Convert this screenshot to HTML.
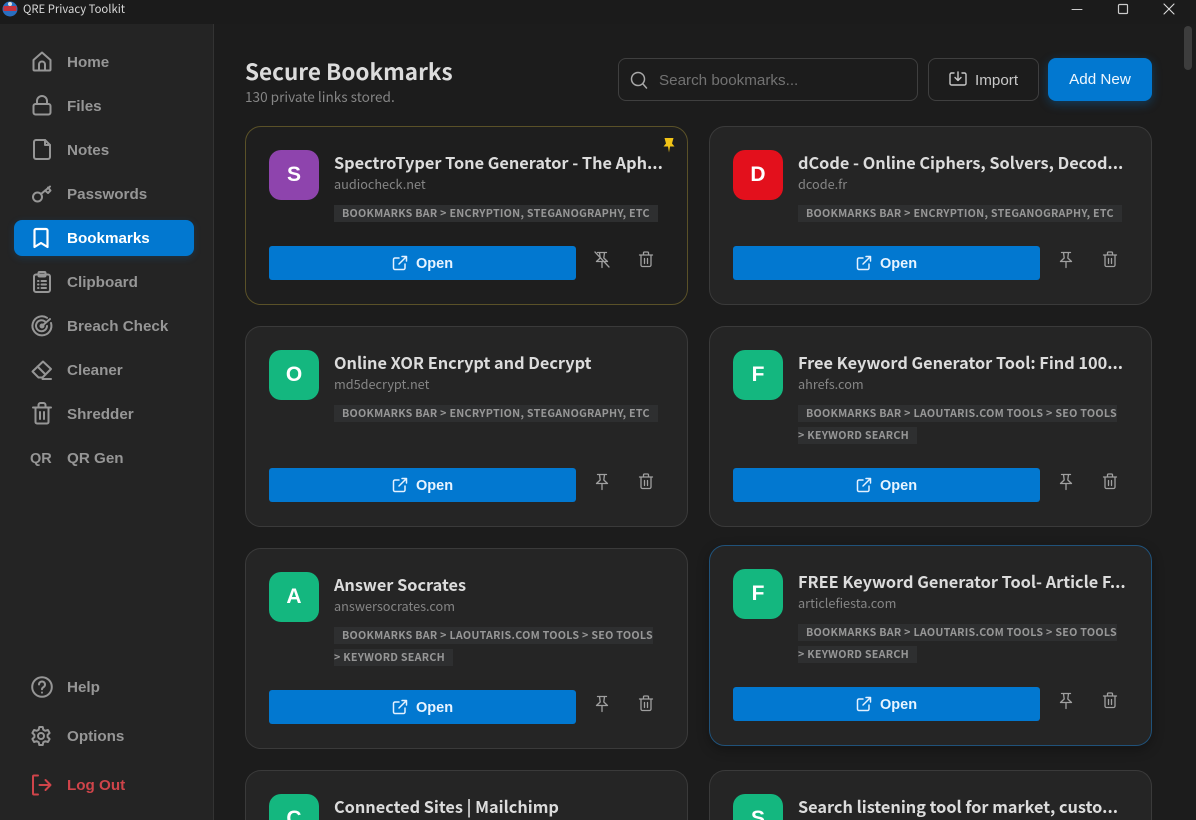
<!DOCTYPE html>
<html lang="en"><head><meta charset="utf-8"><title>QRE Privacy Toolkit</title>
<style>
*{box-sizing:border-box}
html,body{margin:0;padding:0;width:1196px;height:820px;overflow:hidden;background:#1c1c1c;font-family:"Liberation Sans",sans-serif}
#w{position:relative;width:1196px;height:820px;overflow:hidden;background:#1c1c1c}
.a{position:absolute}
.nav{position:absolute;left:67px;font:bold 15.2px/20px "Liberation Sans",sans-serif;color:#969696;white-space:nowrap;margin-top:1px}
svg{position:absolute;fill:none;stroke-linecap:round;stroke-linejoin:round}
.ni{stroke:#969696;stroke-width:2}
.card{position:absolute;width:443px;background:#252525;border:1px solid #3a3a3a;border-radius:16px;overflow:hidden}
.ic{position:absolute;left:23px;top:23px;width:50px;height:50px;border-radius:12px;color:#fff;font:bold 21px/50px "Liberation Sans",sans-serif;text-align:center;overflow:hidden}
.t{position:absolute;left:88px;top:23px;font:bold 16.3px/24px "Noto Sans CJK JP",sans-serif;color:#dcdcdc;white-space:nowrap}
.d{position:absolute;left:88px;top:47px;font:12.7px/20px "Noto Sans CJK JP",sans-serif;color:#858585;white-space:nowrap}
.g{position:absolute;left:88px;top:76px;width:340px;font:bold 10.7px/22px "Noto Sans CJK JP",sans-serif;color:#979797;letter-spacing:.27px;white-space:nowrap}
.g span{background:#2e2f30;padding:1px 8px}
.b{position:absolute;left:23px;width:307px;height:34px;background:#0278d0;border-radius:3px;color:#e8f4ff;font:bold 14.5px/36px "Liberation Sans",sans-serif;padding-left:147px}
</style></head><body><div id="w">

<div class="a" style="left:0;top:0;width:1196px;height:24px;background:#1b1b1b"></div>
<svg style="left:2px;top:1px" width="16" height="16" viewBox="0 0 16 16"><circle cx="8" cy="8" r="7.5" fill="#2a6fc0"/><rect x="1.5" y="5" width="13" height="5" fill="#c8303c"/><circle cx="8" cy="3" r="2" fill="#ddd"/></svg>
<div class="a" style="left:23px;top:0;font:11.3px/18px 'Noto Sans CJK JP',sans-serif;color:#d8d8d8;white-space:nowrap">QRE Privacy Toolkit</div>
<svg style="left:1071px;top:3px" width="12" height="12" viewBox="0 0 12 12" stroke="#ccc"><path d="M1 6.5H11"/></svg>
<svg style="left:1117px;top:3px" width="12" height="12" viewBox="0 0 12 12" stroke="#ccc" stroke-width="1.2"><rect x="1.5" y="1.5" width="9" height="9" rx="1"/></svg>
<svg style="left:1163px;top:3px" width="12" height="12" viewBox="0 0 12 12" stroke="#ddd" stroke-width="1.1"><path d="M1 1L11 11M11 1L1 11"/></svg>

<div class="a" style="left:0;top:24px;width:214px;height:796px;background:#242424;border-right:1px solid #333"></div>
<div class="a" style="left:14px;top:220px;width:180px;height:36px;background:#0278d0;border-radius:8px;box-shadow:0 2px 8px rgba(0,120,208,.2)"></div>

<svg class="ni" style="left:30px;top:49px" width="24" height="24" viewBox="0 0 24 24"><path d="M3.500 11L12 3.500 20.500 11V20.500a1 1 0 0 1-1 1H4.500a1 1 0 0 1-1-1z"/><path d="M9 21.500V15.500a3 3 0 0 1 6 0V21.500"/></svg>
<div class="nav" style="top:52px">Home</div>
<svg class="ni" style="left:30px;top:93px" width="24" height="24" viewBox="0 0 24 24"><rect x="3.500" y="11" width="17" height="10.500" rx="2"/><path d="M7 11V8a5 5 0 0 1 10 0v3"/></svg>
<div class="nav" style="top:96px">Files</div>
<svg class="ni" style="left:30px;top:137px" width="24" height="24" viewBox="0 0 24 24"><path d="M4 5a2 2 0 0 1 2-2h9l5 5v12a2 2 0 0 1-2 2H6a2 2 0 0 1-2-2z"/><path d="M15 3v5h5"/></svg>
<div class="nav" style="top:140px">Notes</div>
<svg class="ni" style="left:30px;top:181px" width="24" height="24" viewBox="0 0 24 24"><circle cx="7.500" cy="16" r="4.500"/><path d="M11 13L20 5.500M15 9.500l3 2.500 2.500-2.500-2.500-3"/></svg>
<div class="nav" style="top:184px">Passwords</div>
<svg style="left:29px;top:226px;stroke:#fff;stroke-width:2.200" width="24" height="24" viewBox="0 0 24 24"><path d="M5.500 4.500a1.500 1.500 0 0 1 1.500-1.500h10a1.500 1.500 0 0 1 1.500 1.500V21L12 17l-6.500 4z"/></svg>
<div class="nav" style="top:228px;color:#fff">Bookmarks</div>
<svg class="ni" style="left:30px;top:270px" width="24" height="24" viewBox="0 0 24 24"><rect x="4" y="4.500" width="16" height="17.500" rx="2"/><rect x="8.500" y="2" width="7" height="4.500" rx="1"/><path d="M8 11h.5M11.500 11H16M8 14.500h.5M11.500 14.500H16M8 18h.5M11.500 18H16"/></svg>
<div class="nav" style="top:272px">Clipboard</div>
<svg class="ni" style="left:30px;top:314px" width="24" height="24" viewBox="0 0 24 24"><path d="M17 3.800A9.500 9.500 0 1 0 21 9"/><path d="M15 7.500A5.500 5.500 0 1 0 17 12"/><circle cx="12" cy="12" r="1.500"/><path d="M12 12L20 5"/></svg>
<div class="nav" style="top:316px">Breach Check</div>
<svg class="ni" style="left:30px;top:357px" width="24" height="24" viewBox="0 0 24 24"><path d="M2.500 14.500L13 4.500l8 7.500-8.500 8.500H8.500z"/><path d="M7.500 9.500l8 8M12.500 22H21"/></svg>
<div class="nav" style="top:360px">Cleaner</div>
<svg class="ni" style="left:30px;top:401px" width="24" height="24" viewBox="0 0 24 24"><path d="M3 6.500H21M5.500 6.500V21a1.500 1.500 0 0 0 1.500 1.500h10a1.500 1.500 0 0 0 1.500-1.500V6.500M8.500 6.500V4a2 2 0 0 1 2-2h3a2 2 0 0 1 2 2v2.500M10 11v7M14 11v7"/></svg>
<div class="nav" style="top:404px">Shredder</div>
<div class="nav" style="left:30px;top:448px;font-size:14.5px">QR</div>
<div class="nav" style="top:448px">QR Gen</div>

<svg class="ni" style="left:30px;top:675px" width="24" height="24" viewBox="0 0 24 24"><circle cx="12" cy="12" r="9.800"/><path d="M9 9.500a3 3 0 1 1 4.500 2.600c-1 .6-1.500 1.100-1.500 2.200M12 17.500v.1"/></svg>
<div class="nav" style="top:677px">Help</div>
<svg class="ni" style="left:29px;top:724px" width="24" height="24" viewBox="0 0 24 24"><circle cx="12" cy="12" r="3"/><path d="M10.300 3h3.400l.6 2.700 1.900 1.100 2.700-.8 1.700 3-2 1.900v2.200l2 1.900-1.700 3-2.700-.8-1.900 1.100-.6 2.700h-3.400l-.6-2.700-1.900-1.100-2.700.8-1.700-3 2-1.900v-2.200l-2-1.900 1.700-3 2.700.8 1.900-1.100z"/></svg>
<div class="nav" style="top:726px">Options</div>
<svg style="left:30px;top:773px;stroke:#d0444a;stroke-width:2" width="24" height="24" viewBox="0 0 24 24"><path d="M8 2.500H4a1 1 0 0 0-1 1v17a1 1 0 0 0 1 1h4M9.500 12H20.500M15.500 7l5 5-5 5"/></svg>
<div class="nav" style="top:775px;color:#d0444a">Log Out</div>

<div class="a" style="left:245px;top:55px;font:bold 22.500px/32px 'Noto Sans CJK JP',sans-serif;color:#dcdcdc;white-space:nowrap">Secure Bookmarks</div>
<div class="a" style="left:245px;top:86px;font:13.6px/20px 'Noto Sans CJK JP',sans-serif;color:#858585;white-space:nowrap">130 private links stored.</div>

<div class="a" style="left:618px;top:58px;width:300px;height:43px;border:1px solid #3f3f3f;border-radius:8px;background:#1c1c1c"></div>
<svg style="left:630px;top:71px;stroke:#a8a8a8;stroke-width:1.500" width="18" height="18" viewBox="0 0 18 18"><circle cx="8" cy="8" r="6.500"/><path d="M13 13l3.500 4"/></svg>
<div class="a" style="left:659px;top:70px;font:15.2px/21px 'Liberation Sans',sans-serif;color:#727272;white-space:nowrap">Search bookmarks...</div>
<div class="a" style="left:928px;top:58px;width:111px;height:43px;border:1px solid #3f3f3f;border-radius:8px"></div>
<svg style="left:949px;top:71px;stroke:#c8c8c8;stroke-width:1.400" width="18" height="16" viewBox="0 0 18 16"><path d="M5 2H2.500a1.500 1.500 0 0 0-1.500 1.500v9A1.500 1.500 0 0 0 2.500 14h13a1.500 1.500 0 0 0 1.500-1.500v-9A1.500 1.500 0 0 0 15.500 2H13M9 1v8M6 6.500L9 9.500 12 6.500"/></svg>
<div class="a" style="left:975px;top:70px;font:15.2px/21px 'Liberation Sans',sans-serif;color:#c8c8c8">Import</div>
<div class="a" style="left:1048px;top:58px;width:104px;height:43px;background:#0278d0;border-radius:8px;box-shadow:0 3px 10px rgba(0,120,208,.35);text-align:center;font:15.2px/44px 'Liberation Sans',sans-serif;color:#f0f8ff">Add New</div>

<svg width="0" height="0" style="position:absolute"><defs>
<g id="ext"><path d="M7 3H3a1.500 1.500 0 0 0-1.500 1.500V13A1.500 1.500 0 0 0 3 14.500h8.500A1.500 1.500 0 0 0 13 13V9M7 9l7.500-7.500M10 1.500h4.500V6"/></g>
<g id="pin"><path d="M3.500 1.500h9M5.500 1.500l.7 5.500L2.500 10.500h11L9.800 7l.7-5.500M8 10.500V16.500"/></g>
<g id="tr"><path d="M1.500 4h13M3 4v10a1.500 1.500 0 0 0 1.500 1.500h7A1.500 1.500 0 0 0 13 14V4M5.500 4V2a1 1 0 0 1 1-1h3a1 1 0 0 1 1 1v2M6.500 7.500v5M9.500 7.500v5"/></g>
</defs></svg>

<!-- card 1 -->
<div class="card" style="left:245px;top:126px;height:179px;background:#1e1e1e;border-color:#5a5128">
<div class="ic" style="background:#8e44ad">S</div><div class="t">SpectroTyper Tone Generator - The Aph...</div><div class="d">audiocheck.net</div>
<div class="g"><span>BOOKMARKS BAR &gt; ENCRYPTION, STEGANOGRAPHY, ETC</span></div>
<div class="b" style="top:119px">Open</div>
<svg style="left:416px;top:10px" width="14" height="16" viewBox="0 0 14 16"><path d="M2.500 1h9L10 6.500 12.500 9.500H1.500L4 6.500zM6 9.500h2L7 15.500z" fill="#f2c417"/></svg>
<svg style="left:146px;top:128px;stroke:#e4f1ff;stroke-width:1.500" width="16" height="16" viewBox="0 0 16 16"><use href="#ext"/></svg>
<svg style="left:348px;top:124px;stroke:#a0a0a0;stroke-width:1.300" width="16" height="18" viewBox="0 0 16 18"><use href="#pin"/><path d="M1 1L15 16"/></svg>
<svg style="left:392px;top:124px;stroke:#a0a0a0;stroke-width:1.300" width="16" height="17" viewBox="0 0 16 17"><use href="#tr"/></svg>
</div>

<!-- card 2 -->
<div class="card" style="left:709px;top:126px;height:179px">
<div class="ic" style="background:#e3101c">D</div><div class="t">dCode - Online Ciphers, Solvers, Decod...</div><div class="d">dcode.fr</div>
<div class="g"><span>BOOKMARKS BAR &gt; ENCRYPTION, STEGANOGRAPHY, ETC</span></div>
<div class="b" style="top:119px">Open</div>
<svg style="left:146px;top:128px;stroke:#e4f1ff;stroke-width:1.500" width="16" height="16" viewBox="0 0 16 16"><use href="#ext"/></svg>
<svg style="left:348px;top:124px;stroke:#a0a0a0;stroke-width:1.300" width="16" height="18" viewBox="0 0 16 18"><use href="#pin"/></svg>
<svg style="left:392px;top:124px;stroke:#a0a0a0;stroke-width:1.300" width="16" height="17" viewBox="0 0 16 17"><use href="#tr"/></svg>
</div>

<!-- card 3 -->
<div class="card" style="left:245px;top:326px;height:201px">
<div class="ic" style="background:#14b77f">O</div><div class="t">Online XOR Encrypt and Decrypt</div><div class="d">md5decrypt.net</div>
<div class="g"><span>BOOKMARKS BAR &gt; ENCRYPTION, STEGANOGRAPHY, ETC</span></div>
<div class="b" style="top:141px">Open</div>
<svg style="left:146px;top:150px;stroke:#e4f1ff;stroke-width:1.500" width="16" height="16" viewBox="0 0 16 16"><use href="#ext"/></svg>
<svg style="left:348px;top:146px;stroke:#a0a0a0;stroke-width:1.300" width="16" height="18" viewBox="0 0 16 18"><use href="#pin"/></svg>
<svg style="left:392px;top:146px;stroke:#a0a0a0;stroke-width:1.300" width="16" height="17" viewBox="0 0 16 17"><use href="#tr"/></svg>
</div>

<!-- card 4 -->
<div class="card" style="left:709px;top:326px;height:201px">
<div class="ic" style="background:#14b77f">F</div><div class="t">Free Keyword Generator Tool: Find 100...</div><div class="d">ahrefs.com</div>
<div class="g"><span>BOOKMARKS BAR &gt; LAOUTARIS.COM TOOLS &gt; SEO TOOLS<br>&gt; KEYWORD SEARCH</span></div>
<div class="b" style="top:141px">Open</div>
<svg style="left:146px;top:150px;stroke:#e4f1ff;stroke-width:1.500" width="16" height="16" viewBox="0 0 16 16"><use href="#ext"/></svg>
<svg style="left:348px;top:146px;stroke:#a0a0a0;stroke-width:1.300" width="16" height="18" viewBox="0 0 16 18"><use href="#pin"/></svg>
<svg style="left:392px;top:146px;stroke:#a0a0a0;stroke-width:1.300" width="16" height="17" viewBox="0 0 16 17"><use href="#tr"/></svg>
</div>

<!-- card 5 -->
<div class="card" style="left:245px;top:548px;height:201px">
<div class="ic" style="background:#14b77f">A</div><div class="t">Answer Socrates</div><div class="d">answersocrates.com</div>
<div class="g"><span>BOOKMARKS BAR &gt; LAOUTARIS.COM TOOLS &gt; SEO TOOLS<br>&gt; KEYWORD SEARCH</span></div>
<div class="b" style="top:141px">Open</div>
<svg style="left:146px;top:150px;stroke:#e4f1ff;stroke-width:1.500" width="16" height="16" viewBox="0 0 16 16"><use href="#ext"/></svg>
<svg style="left:348px;top:146px;stroke:#a0a0a0;stroke-width:1.300" width="16" height="18" viewBox="0 0 16 18"><use href="#pin"/></svg>
<svg style="left:392px;top:146px;stroke:#a0a0a0;stroke-width:1.300" width="16" height="17" viewBox="0 0 16 17"><use href="#tr"/></svg>
</div>

<!-- card 6 -->
<div class="card" style="left:709px;top:545px;height:201px;border-color:#20527a;box-shadow:0 4px 12px rgba(0,0,0,.3)">
<div class="ic" style="background:#14b77f">F</div><div class="t">FREE Keyword Generator Tool- Article F...</div><div class="d">articlefiesta.com</div>
<div class="g"><span>BOOKMARKS BAR &gt; LAOUTARIS.COM TOOLS &gt; SEO TOOLS<br>&gt; KEYWORD SEARCH</span></div>
<div class="b" style="top:141px">Open</div>
<svg style="left:146px;top:150px;stroke:#e4f1ff;stroke-width:1.500" width="16" height="16" viewBox="0 0 16 16"><use href="#ext"/></svg>
<svg style="left:348px;top:146px;stroke:#a0a0a0;stroke-width:1.300" width="16" height="18" viewBox="0 0 16 18"><use href="#pin"/></svg>
<svg style="left:392px;top:146px;stroke:#a0a0a0;stroke-width:1.300" width="16" height="17" viewBox="0 0 16 17"><use href="#tr"/></svg>
</div>

<!-- card 7 -->
<div class="card" style="left:245px;top:770px;height:50px;border-bottom:0;border-radius:16px 16px 0 0">
<div class="ic" style="background:#14b77f;height:26px;border-radius:12px 12px 0 0">C</div><div class="t">Connected Sites | Mailchimp</div>
</div>
<!-- card 8 -->
<div class="card" style="left:709px;top:770px;height:50px;border-bottom:0;border-radius:16px 16px 0 0">
<div class="ic" style="background:#14b77f;height:26px;border-radius:12px 12px 0 0">S</div><div class="t">Search listening tool for market, custo...</div>
</div>

<div class="a" style="left:1184px;top:26px;width:8px;height:44px;background:#3d3d3d;border-radius:4px"></div>
</div></body></html>
